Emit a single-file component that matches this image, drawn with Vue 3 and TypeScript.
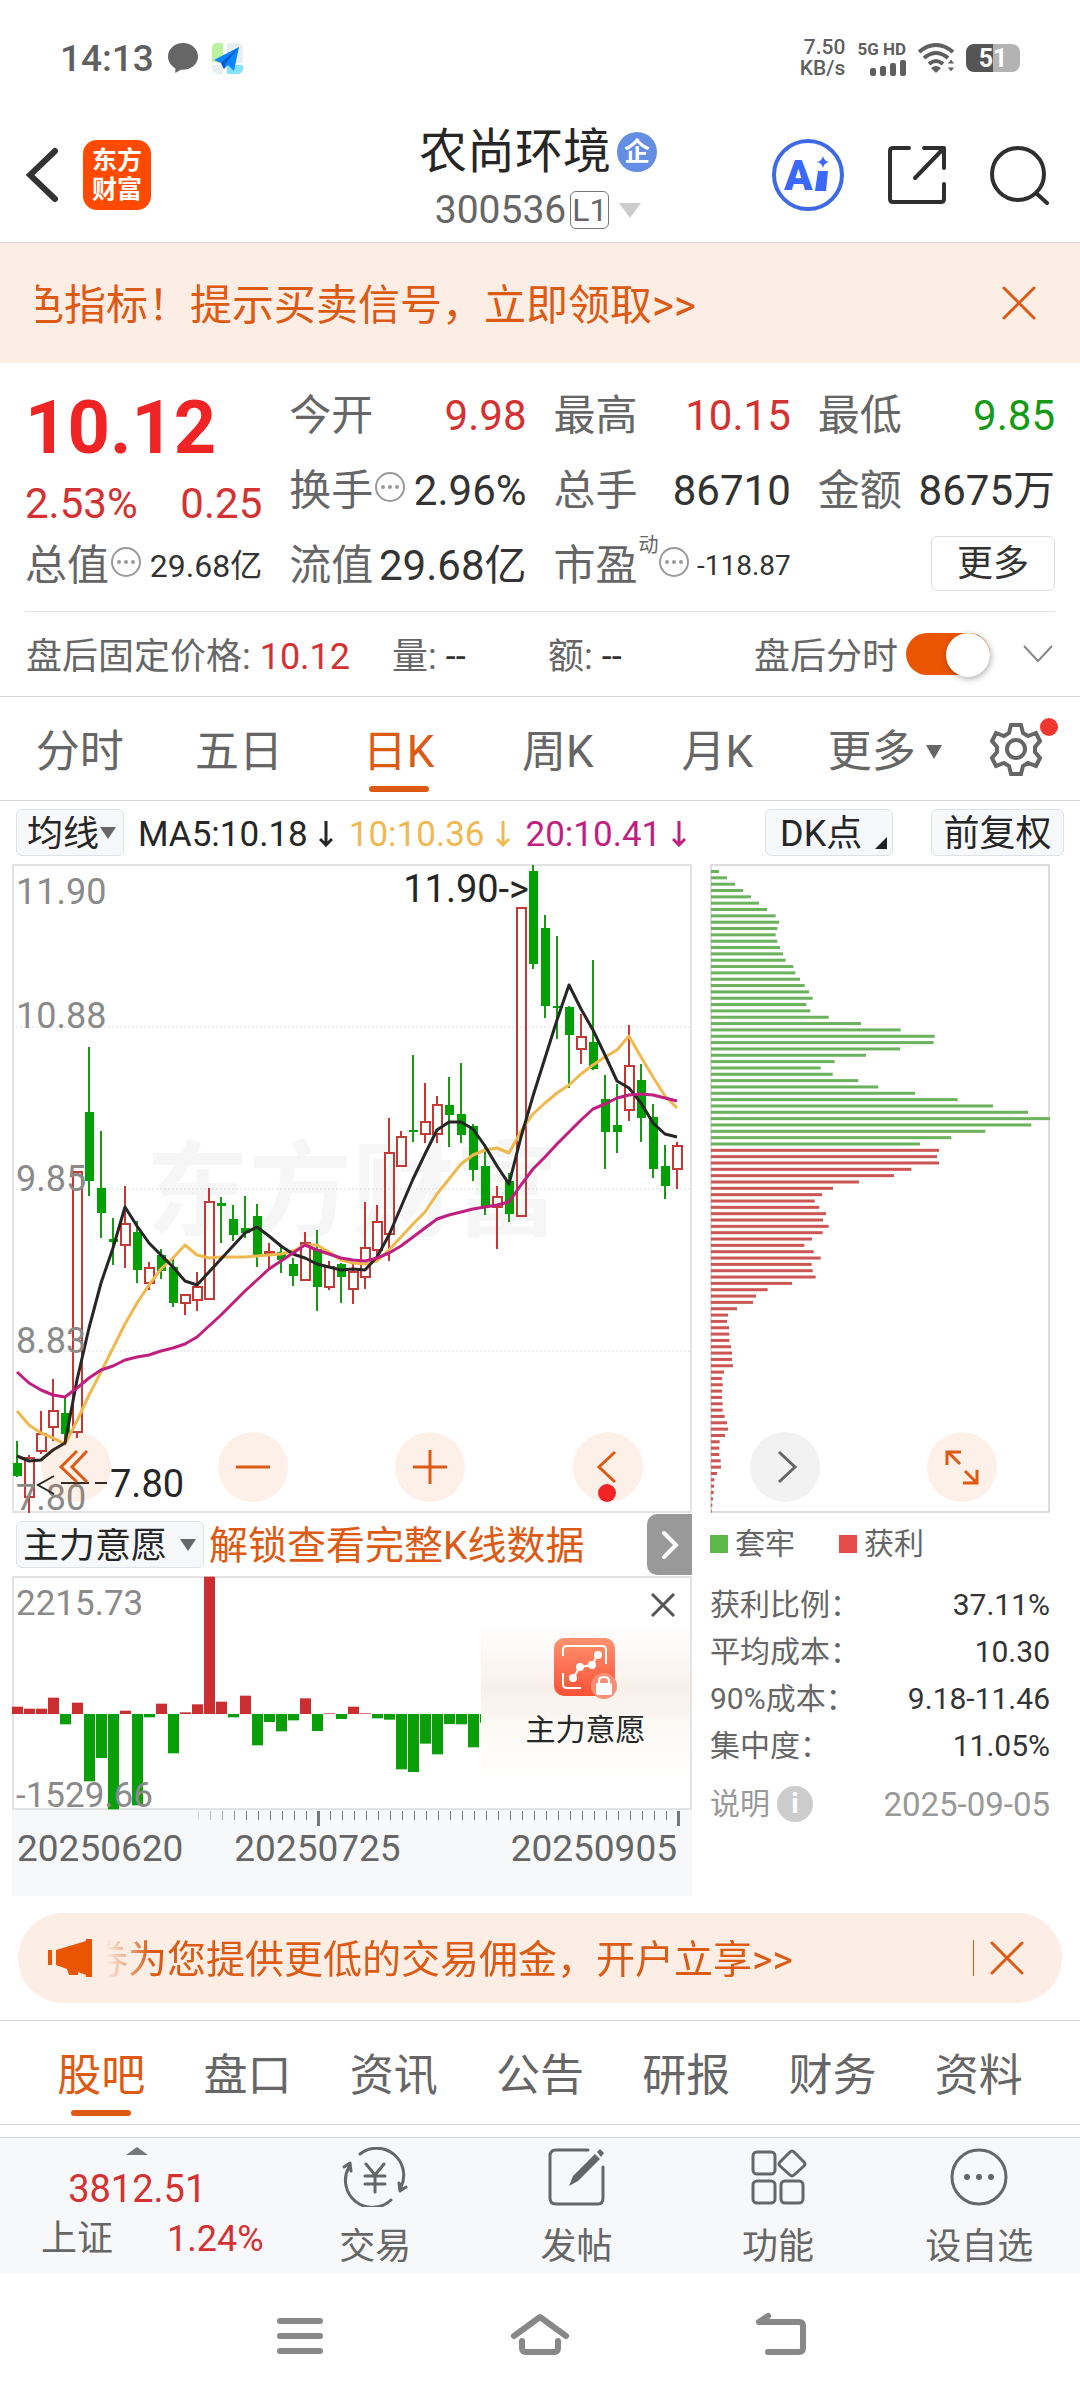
<script setup lang="ts">
import { computed, ref } from 'vue'

type Candle = [up: 0 | 1, high: number, top: number, bottom: number, low: number]

const PITCH = 12
const FIRST_X = 5
const LEVEL_TOP = 12
const LEVEL_RANGE = 1494
const PLOT_HEIGHT = 648

const toY = (level: number): number => Math.round(((level - LEVEL_TOP) / LEVEL_RANGE) * PLOT_HEIGHT) + 1
const toX = (index: number): number => FIRST_X + index * PITCH

const candles: Candle[] = [
  [0, 1340, 1390, 1420, 1424], [1, 1373, 1380, 1470, 1506], [1, 1271, 1325, 1363, 1371], [1, 1198, 1270, 1308, 1340],
  [0, 1240, 1275, 1325, 1345], [1, 717, 720, 1320, 1332], [0, 431, 581, 741, 775], [0, 625, 756, 814, 873],
  [0, 826, 874, 882, 935], [1, 753, 840, 888, 942], [0, 832, 858, 945, 975], [1, 927, 941, 976, 993],
  [0, 898, 912, 949, 967], [0, 915, 938, 1022, 1032], [1, 1000, 1004, 1022, 1050], [1, 950, 986, 1015, 1040],
  [1, 756, 788, 1012, 1014], [0, 777, 791, 799, 884], [0, 797, 829, 865, 880], [0, 775, 850, 860, 872],
  [0, 793, 822, 911, 938], [1, 884, 904, 908, 946], [0, 888, 905, 923, 952], [0, 918, 932, 960, 982],
  [1, 858, 883, 969, 971], [0, 854, 898, 986, 1040], [1, 925, 938, 984, 993], [0, 930, 932, 963, 1022],
  [1, 930, 950, 990, 1025], [1, 789, 894, 961, 989], [1, 797, 836, 899, 925], [1, 596, 675, 863, 924],
  [1, 626, 638, 706, 708], [0, 450, 622, 628, 650], [1, 515, 605, 632, 654], [1, 544, 566, 632, 654],
  [0, 500, 566, 588, 662], [0, 468, 585, 634, 654], [0, 610, 613, 715, 741], [0, 655, 705, 801, 819],
  [1, 753, 777, 800, 898], [0, 723, 741, 817, 836], [1, 108, 110, 822, 824], [0, 12, 26, 241, 252],
  [0, 128, 157, 336, 365], [0, 176, 336, 340, 413], [0, 336, 340, 405, 525], [1, 355, 409, 436, 471],
  [0, 231, 420, 482, 484], [0, 497, 551, 627, 712], [0, 518, 611, 627, 676], [1, 380, 475, 577, 602],
  [0, 470, 508, 595, 650], [0, 563, 592, 713, 733], [0, 657, 705, 752, 782], [1, 650, 661, 713, 760],
]

const averages = [
  {
    color: '#f0b94f',
    levels: [1270, 1303, 1321, 1334, 1347, 1293, 1235, 1180, 1125, 1070, 1022, 980, 943, 918, 887, 912, 917, 916, 915, 916, 914, 911, 908, 902, 887, 888, 905, 922, 930, 932, 924, 900, 870, 840, 812, 770, 735, 702, 680, 669, 664, 676, 625, 587, 560, 538, 519, 495, 472, 454, 439, 406, 455, 500, 545, 573],
  },
  {
    color: '#262626',
    levels: [1375, 1387, 1384, 1360, 1345, 1200, 1080, 975, 895, 801, 845, 884, 912, 938, 971, 980, 950, 920, 890, 861, 847, 868, 890, 910, 917, 932, 939, 945, 944, 945, 915, 865, 800, 735, 678, 623, 605, 605, 621, 660, 705, 748, 640, 545, 458, 370, 289, 345, 392, 450, 511, 525, 560, 607, 632, 638],
  },
  {
    color: '#c01f80',
    levels: [1180, 1207, 1223, 1233, 1239, 1218, 1195, 1177, 1168, 1153, 1147, 1142, 1133, 1125, 1117, 1101, 1076, 1049, 1022, 995, 968, 944, 925, 907, 888, 900, 909, 917, 922, 924, 918, 906, 890, 870, 850, 829, 820, 811, 804, 800, 795, 790, 750, 714, 686, 655, 627, 600, 575, 562, 550, 542, 540, 543, 549, 555],
  },
]

const averageLines = computed(() =>
  averages.map((line) => ({
    color: line.color,
    points: line.levels.map((level, i) => `${toX(i)},${toY(level)}`).join(' '),
  })),
)

const bars = computed(() =>
  candles.map(([up, high, top, bottom, low], i) => ({
    up: up === 1,
    x: toX(i),
    high: toY(high),
    top: toY(top),
    bottom: Math.max(toY(bottom), toY(top) + 2),
    low: toY(low),
  })),
)

const trapped = [24, 48, 72, 96, 120, 144, 168, 194, 204, 199, 194, 199, 207, 216, 224, 247, 253, 267, 281, 294, 305, 286, 298, 353, 450, 569, 671, 668, 567, 465, 371, 329, 365, 442, 502, 612, 740, 846, 951, 1017, 961, 823, 721, 627]
const profit = [684, 678, 684, 601, 549, 444, 366, 333, 311, 325, 345, 336, 353, 335, 303, 280, 308, 329, 302, 305, 314, 243, 170, 135, 126, 78, 51, 48, 54, 55, 55, 60, 63, 63, 66, 39, 33, 35, 33, 33, 35, 35, 41, 48, 51, 42, 26, 25, 25, 29, 30, 18, 10, 9, 8, 6, 4, 2]
const chips = computed(() =>
  [...trapped, ...profit].map((size, i) => ({
    color: i < trapped.length ? '#6ab25c' : '#cb5654',
    y: 6 + (i * 640) / 101,
    width: size / 3,
  })),
)

const will = [22, 16, 16, 49, -31, 34, -202, -132, -286, 10, -274, -10, 31, -118, 5, 29, 412, 37, -10, 55, -94, -24, -52, -19, 47, -51, 2, -15, 22, 2, -13, -17, -166, -174, -89, -121, -30, -31, -100, -26]
const willBars = computed(() =>
  will.map((value, i) => ({
    x: i * PITCH,
    y: value > 0 ? 138 - value / 3 : 138,
    height: Math.abs(value) / 3,
    color: value > 0 ? '#cb2e2e' : '#0a9f08',
  })),
)

const ticks = Array.from({ length: 41 }, (_, i) => ({
  x: 186 + i * PITCH,
  major: i === 10 || i === 40,
  opacity: Math.min(1, 0.25 + i * 0.18),
}))

const periods = ['分时', '五日', '日K', '周K', '月K']
const activePeriod = ref('日K')

const sections = ['股吧', '盘口', '资讯', '公告', '研报', '财务', '资料']
const activeSection = ref('股吧')

const afterHours = ref(true)
const overlay = ref('均线')
const indicator = ref('主力意愿')

const costs = [
  { label: '获利比例：', value: '37.11%' },
  { label: '平均成本：', value: '10.30' },
  { label: '90%成本：', value: '9.18-11.46' },
  { label: '集中度：', value: '11.05%' },
]
</script>

<template>
  <div class="app">
    <div class="status">
      <span class="clock">14:13</span>
      <svg class="bubble" width="30" height="30" viewBox="0 0 30 30">
        <path d="M15 0C6.500 0 0 6 0 13.500c0 5 3 9.300 7.300 11.800V30l5.500-3.200c9 .6 17.200-4.800 17.200-13.300C30 6 23.500 0 15 0z" fill="#666" />
      </svg>
      <svg width="31" height="31" viewBox="0 0 31 31">
        <path d="M5 0h6v19H0V5a5 5 0 0 1 5-5z" fill="#bdf3a0" />
        <path d="M15 0h11a5 5 0 0 1 5 5v15H15z" fill="#e8eff2" />
        <path d="M0 22h11v9H5a5 5 0 0 1-5-5z" fill="#e8eff2" />
        <path d="M15 22h16v4a5 5 0 0 1-5 5H15z" fill="#85e2ff" />
        <path d="M27 4 2 17l7 3 3 6 4-4 6 6z" fill="#0a84ff" />
        <path d="M27 4 9 20l3 6 2-6z" fill="#0757c9" />
      </svg>
      <span class="speed"><span>7.50</span><span>KB/s</span></span>
      <span class="signal">
        <span class="network">5G HD</span>
        <svg width="36" height="16" viewBox="0 0 36 16" fill="#5f5f5f">
          <rect x="0" y="8" width="6" height="8" rx="2" />
          <rect x="10" y="6" width="6" height="10" rx="2" />
          <rect x="20" y="3" width="6" height="13" rx="2" />
          <rect x="30" y="0" width="6" height="16" rx="2" />
        </svg>
      </span>
      <svg class="wifi" width="38" height="30" viewBox="0 0 38 30">
        <g fill="none" stroke="#5f5f5f" stroke-width="4">
          <path d="M1 9q17-14 34 0" />
          <path d="M6 15q12-10 24 0" />
          <path d="M11 21q7-6 14 0" />
        </g>
        <path d="M13 25q5-4 10 0l-5 5z" fill="#5f5f5f" />
        <path d="M29 21l4-5 4 5zM29 24l4 5 4-5z" fill="#5f5f5f" stroke="#fff" stroke-width="1" />
      </svg>
      <span class="battery">51</span>
    </div>

    <header class="header">
      <div class="header-left">
        <button class="plain" aria-label="返回">
          <svg width="34" height="56" viewBox="0 0 34 56" fill="none" stroke="#333" stroke-width="6" stroke-linecap="round">
            <path d="M29 4 4 28l25 24" />
          </svg>
        </button>
        <span class="logo"><span>东方</span><span>财富</span></span>
      </div>
      <div class="stock">
        <h1>农尚环境<span class="badge">企</span></h1>
        <p>
          300536<span class="level">L1</span>
          <svg width="22" height="15" viewBox="0 0 22 15"><path d="M0 0h22L11 15z" fill="#ccc" /></svg>
        </p>
      </div>
      <div class="header-right">
        <button class="plain ai" aria-label="Ai">
          <svg width="74" height="74" viewBox="0 0 74 74">
            <circle cx="37" cy="37" r="34" fill="none" stroke="#3f6ae6" stroke-width="4" />
            <text x="13" y="52" font-size="42" font-weight="900" fill="#3a68fb">A</text>
            <path d="M47 33h10l-2 20H44zM52 18q1 5 6 6-5 1-6 6-1-5-6-6 5-1 6-6z" fill="#3a68fb" />
          </svg>
        </button>
        <button class="plain" aria-label="分享">
          <svg width="60" height="60" viewBox="0 0 60 60" fill="none" stroke="#2f2f2f" stroke-width="4" stroke-linecap="round" stroke-linejoin="round">
            <path d="M22 3H6q-3 0-3 3v48q0 3 3 3h48q3 0 3-3V39M37 3h20v20M57 3 28 33" />
          </svg>
        </button>
        <button class="plain" aria-label="搜索">
          <svg width="60" height="60" viewBox="0 0 60 60" fill="none" stroke="#2f2f2f" stroke-width="4" stroke-linecap="round">
            <circle cx="28" cy="29" r="26" />
            <path d="m46 48 11 10" />
          </svg>
        </button>
      </div>
    </header>

    <div class="notice">
      <div class="notice-window"><span class="notice-text">色指标！提示买卖信号，立即领取&gt;&gt;</span></div>
      <button class="plain" aria-label="关闭">
        <svg width="34" height="34" viewBox="0 0 34 34" stroke="#dd5a14" stroke-width="3" stroke-linecap="round"><path d="m2 2 30 30M32 2 2 32" /></svg>
      </button>
    </div>

    <section class="quote">
      <div>
        <div class="price red">10.12</div>
        <div class="change red"><span>2.53%</span><span>0.25</span></div>
        <div class="cell">
          <span class="name">总值<svg class="dots" width="30" height="32" viewBox="0 0 30 32"><circle cx="15" cy="16" r="14" fill="none" stroke="#999" stroke-width="2" /><g fill="#999"><circle cx="8" cy="16" r="2" /><circle cx="15" cy="16" r="2" /><circle cx="22" cy="16" r="2" /></g></svg></span>
          <span class="mid">29.68亿</span>
        </div>
      </div>
      <div>
        <div class="cell"><span class="name">今开</span><span class="red">9.98</span></div>
        <div class="cell">
          <span class="name">换手<svg class="dots" width="30" height="32" viewBox="0 0 30 32"><circle cx="15" cy="16" r="14" fill="none" stroke="#999" stroke-width="2" /><g fill="#999"><circle cx="8" cy="16" r="2" /><circle cx="15" cy="16" r="2" /><circle cx="22" cy="16" r="2" /></g></svg></span>
          <span>2.96%</span>
        </div>
        <div class="cell"><span class="name">流值</span><span>29.68亿</span></div>
      </div>
      <div>
        <div class="cell"><span class="name">最高</span><span class="red">10.15</span></div>
        <div class="cell"><span class="name">总手</span><span>86710</span></div>
        <div class="cell">
          <span class="name">市盈<sup>动</sup><svg class="dots" width="30" height="32" viewBox="0 0 30 32"><circle cx="15" cy="16" r="14" fill="none" stroke="#999" stroke-width="2" /><g fill="#999"><circle cx="8" cy="16" r="2" /><circle cx="15" cy="16" r="2" /><circle cx="22" cy="16" r="2" /></g></svg></span>
          <span class="small">-118.87</span>
        </div>
      </div>
      <div>
        <div class="cell"><span class="name">最低</span><span class="green">9.85</span></div>
        <div class="cell"><span class="name">金额</span><span>8675万</span></div>
        <div class="cell end"><button class="more">更多</button></div>
      </div>
    </section>

    <section class="after">
      <span class="after-price">盘后固定价格: <b class="red">10.12</b></span>
      <span class="after-volume">量: <b>--</b></span>
      <span class="after-amount">额: <b>--</b></span>
      <label for="after-hours">盘后分时</label>
      <input id="after-hours" v-model="afterHours" type="checkbox" class="switch" />
      <button class="plain" aria-label="展开">
        <svg width="32" height="20" viewBox="0 0 32 20" fill="none" stroke="#888" stroke-width="2"><path d="m2 2 14 15L30 2" /></svg>
      </button>
    </section>

    <nav class="periods">
      <button v-for="period in periods" :key="period" :class="{ active: period === activePeriod }" @click="activePeriod = period">{{ period }}</button>
      <button class="period-more">更多<svg width="16" height="14" viewBox="0 0 16 14"><path d="M0 0h16L8 14z" fill="#666" /></svg></button>
      <button class="gear" aria-label="设置">
        <svg width="52" height="54" viewBox="0 0 52 54" fill="none" stroke="#666" stroke-width="4">
          <path d="M21 3h10l2 8 5 3 8-3 4 8-5 6v5l5 6-4 8-8-3-5 3-2 8H21l-2-8-5-3-8 3-4-8 5-6v-5l-5-6 4-8 8 3 5-3z" />
          <circle cx="26" cy="27" r="9" />
        </svg>
        <i class="alert"></i>
      </button>
    </nav>

    <div class="tools">
      <span class="picker">
        <select v-model="overlay" aria-label="主图指标"><option>均线</option></select>
        <svg width="16" height="12" viewBox="0 0 16 12"><path d="M0 0h16L8 12z" fill="#666" /></svg>
      </span>
      <div class="averages">
        <span>MA5:10.18<svg width="14" height="26" viewBox="0 0 14 26"><path d="M7 0v24M1 18l6 6 6-6" /></svg></span>
        <span class="ten">10:10.36<svg width="14" height="26" viewBox="0 0 14 26"><path d="M7 0v24M1 18l6 6 6-6" /></svg></span>
        <span class="twenty">20:10.41<svg width="14" height="26" viewBox="0 0 14 26"><path d="M7 0v24M1 18l6 6 6-6" /></svg></span>
      </div>
      <button class="chip dk">DK点<svg width="12" height="12" viewBox="0 0 12 12"><path d="M12 0v12H0z" fill="#222" /></svg></button>
      <button class="chip">前复权</button>
    </div>

    <div class="charts">
      <svg class="plot" viewBox="0 0 680 649" role="img" aria-label="日K">
        <text x="340" y="364" class="watermark">东方财富</text>
        <g stroke="#dcdcdc" stroke-dasharray="2 2">
          <path d="M0 163h680M0 325h680M0 487h680" />
        </g>
        <rect x="1" y="1" width="678" height="647" fill="none" stroke="#e3e3e3" stroke-width="2" />
        <g v-for="bar in bars" :key="bar.x">
          <template v-if="bar.up">
            <path :d="`M${bar.x} ${bar.high}V${bar.top}M${bar.x} ${bar.bottom}V${bar.low}`" stroke="#c23a37" stroke-width="2" />
            <rect :x="bar.x - 4" :y="bar.top" width="9" :height="bar.bottom - bar.top" fill="none" stroke="#c23a37" stroke-width="2" />
          </template>
          <template v-else>
            <path :d="`M${bar.x} ${bar.high}V${bar.low}`" stroke="#1d961b" stroke-width="2" />
            <rect :x="bar.x - 4" :y="bar.top" width="9" :height="bar.bottom - bar.top" fill="#049f04" />
          </template>
        </g>
        <polyline v-for="line in averageLines" :key="line.color" :points="line.points" :stroke="line.color" fill="none" stroke-width="3" stroke-linejoin="round" />
        <g class="scale">
          <text x="4" y="40">11.90</text>
          <text x="4" y="164">10.88</text>
          <text x="4" y="327">9.85</text>
          <text x="4" y="489">8.83</text>
          <text x="4" y="646">7.80</text>
        </g>
        <text x="517" y="38" class="mark" text-anchor="end">11.90-&gt;</text>
        <text x="98" y="633" class="mark">7.80</text>
        <path d="M42 612 26 621l16 9M49 619h28M83 619h12" fill="none" stroke="#262626" stroke-width="2" />
      </svg>
      <svg class="plot" viewBox="0 0 340 649" role="img" aria-label="筹码分布">
        <rect x="1" y="1" width="338" height="647" fill="none" stroke="#bbb" stroke-width="1" />
        <rect v-for="chip in chips" :key="chip.y" x="1" :y="chip.y" :width="chip.width" height="3" :fill="chip.color" />
      </svg>
      <div class="controls">
        <button aria-label="最早"><svg viewBox="0 0 70 70"><path d="M36 19 20 35l16 15M46 19 31 35l15 15" /></svg></button>
        <button aria-label="缩小"><svg viewBox="0 0 70 70"><path d="M18 35h34" /></svg></button>
        <button aria-label="放大"><svg viewBox="0 0 70 70"><path d="M18 35h34M35 18v34" /></svg></button>
        <button aria-label="向左"><svg viewBox="0 0 70 70"><path d="M42 20 26 35l16 15" /><circle cx="34" cy="61" r="9" class="dot" /></svg></button>
        <button aria-label="向右" class="gray"><svg viewBox="0 0 70 70"><path d="m29 20 16 15-16 15" /></svg></button>
        <button aria-label="全屏"><svg viewBox="0 0 70 70"><path d="M20 33V20h14M21 20l12 12M50 38v13H36M49 50 38 39" /></svg></button>
      </div>
    </div>

    <div class="details">
      <div class="indicator">
        <div class="indicator-bar">
          <span class="picker wide">
            <select v-model="indicator" aria-label="副图指标"><option>主力意愿</option></select>
            <svg width="16" height="12" viewBox="0 0 16 12"><path d="M0 0h16L8 12z" fill="#666" /></svg>
          </span>
          <a href="#">解锁查看完整K线数据</a>
          <button class="expand" aria-label="展开">
            <svg width="18" height="30" viewBox="0 0 18 30" fill="none" stroke="#fff" stroke-width="4" stroke-linecap="round"><path d="m3 3 12 12L3 27" /></svg>
          </button>
        </div>
        <div class="subchart">
          <svg class="plot" viewBox="0 0 680 234" role="img" aria-label="主力意愿">
            <rect x="1" y="1" width="678" height="232" fill="none" stroke="#e3e3e3" stroke-width="2" />
            <rect v-for="bar in willBars" :key="bar.x" :x="bar.x" :y="bar.y" width="11" :height="bar.height" :fill="bar.color" />
            <g class="scale sub">
              <text x="4" y="39">2215.73</text>
              <text x="4" y="231">-1529.66</text>
            </g>
          </svg>
          <div class="locked">
            <button class="plain locked-close" aria-label="关闭">
              <svg width="24" height="24" viewBox="0 0 24 24" stroke="#555" stroke-width="3"><path d="m1 1 22 22M23 1 1 23" /></svg>
            </button>
            <svg width="64" height="62" viewBox="0 0 64 62">
              <defs><linearGradient id="lock-fill" x1="0" y1="0" x2="0" y2="1"><stop offset="0" stop-color="#ff9270" /><stop offset="1" stop-color="#fb5136" /></linearGradient></defs>
              <rect width="61" height="58" rx="10" fill="url(#lock-fill)" />
              <g fill="none" stroke="#fff" stroke-width="2"><path d="M9 18v-6q0-4 4-4h35q4 0 4 4v14M9 35v11q0 4 4 4h14" /><path d="m19 40 7-11 12-2 6-11" /></g>
              <g fill="#fff"><circle cx="19" cy="40" r="4" /><circle cx="26" cy="29" r="4" /><circle cx="38" cy="27" r="4" /><circle cx="44" cy="17" r="4" /></g>
              <circle cx="50" cy="48" r="13" fill="#f98f75" />
              <rect x="42" y="45" width="16" height="12" rx="2" fill="#fff" />
              <path d="M45 46v-3q0-4 5-4t5 4v3" fill="none" stroke="#fff" stroke-width="2" />
            </svg>
            <span>主力意愿</span>
          </div>
        </div>
        <div class="axis">
          <svg class="plot" viewBox="0 0 680 17">
            <rect v-for="tick in ticks" :key="tick.x" :x="tick.major ? tick.x - 1 : tick.x" y="1" :width="tick.major ? 3 : 1" :height="tick.major ? 15 : 9" fill="#777" :opacity="tick.opacity" />
          </svg>
          <div class="dates"><span>20250620</span><span>20250725</span><span>20250905</span></div>
        </div>
      </div>

      <div class="costs">
        <div class="legend"><span><i class="sq-green"></i>套牢</span><span><i class="sq-red"></i>获利</span></div>
        <dl>
          <div v-for="cost in costs" :key="cost.label"><dt>{{ cost.label }}</dt><dd>{{ cost.value }}</dd></div>
        </dl>
        <div class="note"><span>说明<i class="info">i</i></span><span class="date">2025-09-05</span></div>
      </div>
    </div>

    <div class="promo">
      <svg width="46" height="40" viewBox="0 0 46 40" fill="#ea5504">
        <path d="M0 12h4v15H0zM8 12 38 3V1h6v38h-6v-2l-8-3v3h-9l-2-6-11-4z" />
      </svg>
      <div class="promo-window"><span class="promo-text">券为您提供更低的交易佣金，开户立享&gt;&gt;</span></div>
      <i class="rule"></i>
      <button class="plain" aria-label="关闭">
        <svg width="34" height="34" viewBox="0 0 34 34" stroke="#dd5a14" stroke-width="3" stroke-linecap="round"><path d="m2 2 30 30M32 2 2 32" /></svg>
      </button>
    </div>

    <nav class="sections">
      <button v-for="section in sections" :key="section" :class="{ active: section === activeSection }" @click="activeSection = section">{{ section }}</button>
    </nav>

    <footer class="bottom">
      <a href="#" class="index">
        <svg width="22" height="8" viewBox="0 0 22 8"><path d="M0 8 11 0l11 8z" fill="#777" /></svg>
        <span class="index-value red">3812.51</span>
        <span class="index-row"><span>上证</span><span class="red">1.24%</span></span>
      </a>
      <a href="#" class="action">
        <svg width="66" height="60" viewBox="0 0 66 60" fill="none" stroke="#666" stroke-width="3" stroke-linecap="round" stroke-linejoin="round">
          <path d="M18 7a27 27 0 0 1 41 33M49 53A27 27 0 0 1 7 20M2 20l6-4 1 8M64 40l-6 4-1-8M24 17l9 11 9-11M33 28v17M23 29h20M23 37h20" />
        </svg>
        交易
      </a>
      <a href="#" class="action">
        <svg width="66" height="60" viewBox="0 0 66 60" fill="none" stroke="#666" stroke-width="3" stroke-linecap="round" stroke-linejoin="round">
          <path d="M44 3H12q-6 0-6 6v42q0 6 6 6h42q5 0 5-6V20" />
          <path d="m25 39 4-10L51 7l5 5-22 22z" fill="#666" stroke="none" />
          <path d="m53 5 3-3 4 4-3 4z" fill="#666" stroke="none" />
        </svg>
        发帖
      </a>
      <a href="#" class="action">
        <svg width="66" height="60" viewBox="0 0 66 60" fill="none" stroke="#666" stroke-width="3" stroke-linejoin="round">
          <rect x="8" y="5" width="22" height="22" rx="4" />
          <rect x="8" y="34" width="22" height="22" rx="4" />
          <rect x="36" y="34" width="22" height="22" rx="4" />
          <path d="M45 5q2-2 4 0l10 10q2 2 0 4L49 28q-2 2-4 0L35 19q-2-2 0-4z" />
        </svg>
        功能
      </a>
      <a href="#" class="action">
        <svg width="66" height="60" viewBox="0 0 66 60" fill="none" stroke="#666" stroke-width="3">
          <circle cx="33" cy="30" r="27" />
          <g fill="#666" stroke="none"><circle cx="21" cy="30" r="3" /><circle cx="33" cy="30" r="3" /><circle cx="45" cy="30" r="3" /></g>
        </svg>
        设自选
      </a>
    </footer>

    <nav class="system">
      <button class="plain" aria-label="最近任务">
        <svg width="60" height="48" viewBox="0 0 60 48" stroke="#888" stroke-width="6" stroke-linecap="round"><path d="M10 9h40M10 24h40M10 39h40" /></svg>
      </button>
      <button class="plain" aria-label="主屏幕">
        <svg width="60" height="48" viewBox="0 0 60 48" fill="none" stroke="#888" stroke-width="6" stroke-linecap="round" stroke-linejoin="round"><path d="M4 24 30 5l26 19M12 29v7q0 4 4 4h28q4 0 4-4v-7" /></svg>
      </button>
      <button class="plain" aria-label="后退">
        <svg width="60" height="48" viewBox="0 0 60 48" fill="none" stroke="#888" stroke-width="6" stroke-linecap="round" stroke-linejoin="round"><path d="M18 4 9 10h40q4 0 4 4v22q0 4-4 4H18" /></svg>
      </button>
    </nav>
  </div>
</template>

<style>
body {
  background: #fff;
}
</style>

<style scoped>
.app {
  font-family: Roboto, "Noto Sans CJK SC", sans-serif;
  color: #333;
  font-size: 36px;
  line-height: 1;
  overflow: hidden;
}

svg {
  display: block;
  flex: none;
}

button,
select,
input {
  font: inherit;
  color: inherit;
  margin: 0;
  padding: 0;
  border: 0;
  background: none;
}

a {
  color: inherit;
  text-decoration: none;
}

h1,
p,
dl,
dd {
  margin: 0;
  font-weight: 400;
}

b {
  font-weight: 400;
  color: #333;
}

.red,
b.red {
  color: #d43232;
}

.green {
  color: #149a14;
}

.plain {
  display: block;
}

.status {
  display: flex;
  align-items: center;
  height: 44px;
  padding: 36px 60px 0 60px;
  color: #5f5f5f;
}

.clock {
  font-size: 37px;
  font-weight: 500;
}

.bubble {
  margin: 0 14px 0 14px;
}

.speed {
  display: grid;
  margin-left: auto;
  font-size: 21px;
  font-weight: 500;
  text-align: right;
}

.signal {
  display: grid;
  justify-items: end;
  gap: 2px;
  margin-left: 12px;
}

.network {
  font-size: 17px;
  font-weight: 700;
}

.wifi {
  margin: 0 10px 0 12px;
}

.battery {
  width: 54px;
  height: 28px;
  border-radius: 8px;
  background: linear-gradient(90deg, #555 50%, #b3b3b3 50%);
  color: #fff;
  font-size: 25px;
  font-weight: 700;
  line-height: 29px;
  text-align: center;
}

.header {
  display: grid;
  grid-template-columns: 1fr auto 1fr;
  align-items: center;
  height: 134px;
  padding: 28px 30px 0 26px;
  border-bottom: 1px solid #d6d6d6;
}

.header-left,
.header-right {
  display: flex;
  align-items: center;
}

.header-left {
  gap: 23px;
}

.header-right {
  justify-content: flex-end;
  gap: 43px;
}

.logo {
  display: grid;
  align-content: center;
  justify-items: center;
  gap: 4px;
  width: 68px;
  height: 70px;
  border-radius: 14px;
  background: #ff4a00;
  color: #fff;
  font-size: 25px;
  font-weight: 700;
}

.stock {
  padding-top: 12px;
  text-align: center;
}

.stock h1 {
  display: flex;
  align-items: center;
  justify-content: center;
  gap: 6px;
  height: 58px;
  color: #262626;
  font-size: 48px;
}

.badge {
  width: 40px;
  height: 40px;
  border-radius: 50%;
  background: #648de4;
  color: #fff;
  font-size: 26px;
  font-weight: 700;
  line-height: 40px;
}

.stock p {
  display: flex;
  align-items: center;
  justify-content: center;
  height: 58px;
  color: #666;
  font-size: 39px;
}

.level {
  box-sizing: border-box;
  width: 39px;
  height: 38px;
  margin: 0 10px 0 4px;
  border: 1px solid #777;
  border-radius: 6px;
  font-size: 32px;
  line-height: 37px;
}

.header-right .ai {
  margin-right: -1px;
}

.notice {
  display: flex;
  align-items: center;
  justify-content: space-between;
  height: 120px;
  padding: 0 44px 0 36px;
  background: #fceee4;
  color: #dd5a14;
  font-size: 42px;
}

.notice-window {
  flex: 1;
  padding-top: 5px;
  overflow: hidden;
  line-height: 60px;
}

.notice-text {
  margin-left: -14px;
  white-space: nowrap;
}

.quote {
  display: grid;
  grid-template-columns: repeat(4, 1fr);
  gap: 27px;
  margin: 0 25px;
  padding: 13px 0 10px;
  border-bottom: 1px solid #e6e6e6;
  font-size: 42px;
  white-space: nowrap;
}

.price {
  height: 100px;
  color: #f02424;
  font-size: 74px;
  font-weight: 700;
  line-height: 104px;
}

.change,
.cell {
  display: flex;
  align-items: center;
  justify-content: space-between;
}

.change {
  height: 50px;
}

.cell {
  height: 75px;
}

.change span,
.cell > span {
  padding-top: 5px;
}

.cell.end {
  justify-content: flex-end;
}

.name {
  display: flex;
  align-items: center;
  color: #666;
}

.dots {
  margin: 0 0 8px 2px;
}

.mid {
  font-size: 32px;
}

.small {
  font-size: 28px;
}

sup {
  align-self: flex-start;
  margin: -10px 0 0 1px;
  font-size: 20px;
  line-height: 1;
}

.name sup + .dots {
  margin-left: 0;
}

.more {
  width: 124px;
  height: 55px;
  border: 1px solid #ddd;
  border-radius: 6px;
  font-size: 36px;
}

.after {
  display: flex;
  align-items: center;
  height: 84px;
  padding: 0 26px;
  border-bottom: 1px solid #d6d6d6;
  color: #666;
  white-space: nowrap;
}

.after span,
.after label {
  padding-top: 5px;
}

.after-volume {
  width: 156px;
  margin-left: 42px;
}

.after label {
  margin-left: auto;
}

.switch {
  appearance: none;
  width: 84px;
  height: 42px;
  margin: 0 32px 0 8px;
  border-radius: 21px;
  background: #ccc;
}

.switch::before {
  content: "";
  display: block;
  width: 44px;
  height: 44px;
  border-radius: 50%;
  background: #fff;
  box-shadow: 1px 2px 6px rgba(0, 0, 0, 0.3);
}

.switch:checked {
  background: #ea5504;
}

.switch:checked::before {
  margin-left: 40px;
}

.periods {
  display: grid;
  grid-template-columns: repeat(6, 4fr) 3fr;
  height: 103px;
  padding-right: 4px;
  border-bottom: 1px solid #d6d6d6;
  color: #666;
}

.periods button,
.sections button {
  position: relative;
  padding-top: 6px;
  font-size: 44px;
  line-height: 1;
}

.active {
  color: #dd5a14;
}

.active::after {
  content: "";
  position: absolute;
  bottom: 8px;
  left: calc(50% - 30px);
  width: 60px;
  height: 6px;
  border-radius: 3px;
  background: #dd5a14;
}

.period-more,
.gear {
  display: flex;
  align-items: center;
  justify-content: center;
}

.periods .period-more {
  gap: 10px;
  padding-left: 16px;
}

.periods .gear {
  padding-top: 0;
}

.alert {
  position: absolute;
  top: 21px;
  right: 18px;
  width: 18px;
  height: 18px;
  border-radius: 50%;
  background: #f23730;
}

.tools {
  display: flex;
  align-items: center;
  height: 63px;
  padding: 0 16px;
  color: #262626;
  white-space: nowrap;
}

.picker {
  position: relative;
  display: block;
}

.picker select {
  appearance: none;
  box-sizing: border-box;
  width: 108px;
  height: 47px;
  padding: 2px 0 0 10px;
}

.picker select,
.chip {
  border: 1px solid #dfe1e6;
  border-radius: 6px;
  background: #f7f8fa;
}

.picker svg {
  position: absolute;
  top: 18px;
  right: 8px;
  pointer-events: none;
}

.picker.wide select {
  width: 188px;
  padding-left: 6px;
}

.averages {
  display: flex;
  gap: 16px;
  margin: 0 auto 0 14px;
  padding-top: 3px;
  font-size: 35px;
}

.averages span {
  display: flex;
  align-items: center;
  gap: 11px;
}

.averages svg {
  fill: none;
  stroke: currentColor;
  stroke-width: 3;
}

.ten {
  color: #f0b94f;
}

.twenty {
  color: #c01f80;
}

.chip {
  box-sizing: border-box;
  height: 47px;
  width: 133px;
  padding-top: 2px;
}

.chip.dk {
  display: flex;
  align-items: center;
  justify-content: space-between;
  width: 128px;
  margin-right: 38px;
  padding: 2px 5px 0 14px;
}

.dk svg {
  align-self: flex-end;
  margin-bottom: 6px;
}

.charts,
.details {
  position: relative;
  display: grid;
  grid-template-columns: 2fr 1fr;
  column-gap: 18px;
  padding: 0 30px 0 12px;
}

.plot {
  width: 100%;
  height: auto;
  overflow: visible;
}

.watermark {
  fill: #f6f6f6;
  font-size: 103px;
  font-weight: 700;
  text-anchor: middle;
}

.scale {
  fill: #8a8a8a;
  font-size: 36px;
}

.scale.sub {
  font-size: 35px;
}

.mark {
  fill: #262626;
  font-size: 38px;
}

.controls {
  position: absolute;
  right: 83px;
  bottom: 11px;
  left: 41px;
  display: flex;
  justify-content: space-between;
}

.controls button {
  width: 70px;
  height: 70px;
  border-radius: 50%;
  background: rgba(235, 90, 0, 0.09);
}

.controls svg {
  fill: none;
  stroke: #dd5a14;
  stroke-width: 3;
}

.controls .dot {
  fill: #f02424;
  stroke: none;
}

.controls .gray {
  background: #f2f2f2;
}

.controls .gray svg {
  stroke: #666;
}

.indicator-bar {
  display: flex;
  align-items: center;
  gap: 5px;
  height: 63px;
  padding-left: 4px;
  color: #262626;
}

.indicator-bar a {
  padding-top: 4px;
  color: #dd5a14;
  font-size: 39px;
  white-space: nowrap;
}

.expand {
  display: flex;
  align-items: center;
  justify-content: center;
  width: 45px;
  height: 61px;
  margin-left: auto;
  border-radius: 10px 0 0 10px;
  background: #999;
}

.subchart {
  position: relative;
}

.locked {
  position: absolute;
  top: 2px;
  right: 0;
  bottom: 2px;
  width: 31%;
  display: flex;
  flex-direction: column;
  align-items: center;
  border-right: 2px solid #e3e3e3;
  box-sizing: border-box;
  background: linear-gradient(180deg, #fff 20%, #f9f0ea 48%, #fcfaf7 68%, #fff 90%);
  color: #262626;
  font-size: 30px;
}

.locked-close {
  align-self: flex-end;
  margin: 15px 15px 21px;
}

.locked span {
  margin-top: 15px;
}

.axis {
  height: 86px;
  background: #f7f8fa;
}

.dates {
  display: flex;
  justify-content: space-between;
  padding: 3px 15px 0 5px;
  color: #666;
  font-size: 37px;
}

.dates span:nth-child(2) {
  margin-right: 59px;
}

.costs {
  color: #666;
  font-size: 30px;
}

.legend {
  display: flex;
  gap: 44px;
  height: 61px;
}

.legend span,
.note span {
  display: flex;
  align-items: center;
}

.legend i {
  width: 18px;
  height: 18px;
  margin-right: 7px;
}

.sq-green {
  background: #5ab947;
}

.sq-red {
  background: #e84b4b;
}

dl {
  padding-top: 7px;
}

dl div {
  display: flex;
  align-items: center;
  justify-content: space-between;
  height: 47px;
}

dd {
  color: #333;
}

.note {
  display: flex;
  align-items: center;
  justify-content: space-between;
  height: 70px;
  color: #999;
}

.info {
  width: 36px;
  height: 36px;
  margin-left: 7px;
  border-radius: 50%;
  background: #ccc;
  color: #fff;
  font-size: 28px;
  font-style: normal;
  font-weight: 700;
  line-height: 36px;
  text-align: center;
}

.date {
  font-size: 33px;
}

.promo {
  display: flex;
  align-items: center;
  height: 90px;
  margin: 17px 18px;
  padding: 0 38px 0 30px;
  border-radius: 45px;
  background: #fceee4;
  color: #dd5a14;
  font-size: 39px;
}

.promo-window {
  flex: 1;
  margin-left: 12px;
  padding-top: 4px;
  overflow: hidden;
  line-height: 60px;
  white-space: nowrap;
  mask-image: linear-gradient(90deg, transparent, #000 45px);
}

.promo-text {
  margin-left: -17px;
}

.rule {
  width: 1px;
  height: 36px;
  margin-right: 16px;
  background: #dd5a14;
}

.sections {
  display: grid;
  grid-template-columns: repeat(7, 1fr);
  height: 103px;
  padding: 0 28px;
  border: solid #d6d6d6;
  border-width: 1px 0;
  color: #666;
}

.bottom {
  display: grid;
  grid-template-columns: 274fr repeat(4, 201fr);
  height: 135px;
  margin-top: 12px;
  border-top: 1px solid #d6d6d6;
  background: #f7f8fa;
  color: #666;
}

.index {
  display: flex;
  flex-direction: column;
  align-items: center;
  padding-top: 9px;
}

.index-value {
  margin-top: 15px;
  font-size: 38px;
}

.index-row {
  display: flex;
  align-items: center;
  gap: 54px;
  margin-top: 13px;
  padding-left: 30px;
}

.action {
  display: flex;
  flex-direction: column;
  align-items: center;
  gap: 22px;
  padding-top: 9px;
}

.system {
  display: grid;
  grid-template-columns: repeat(3, 1fr);
  align-items: center;
  justify-items: center;
  height: 126px;
  padding: 0 180px;
}
</style>
